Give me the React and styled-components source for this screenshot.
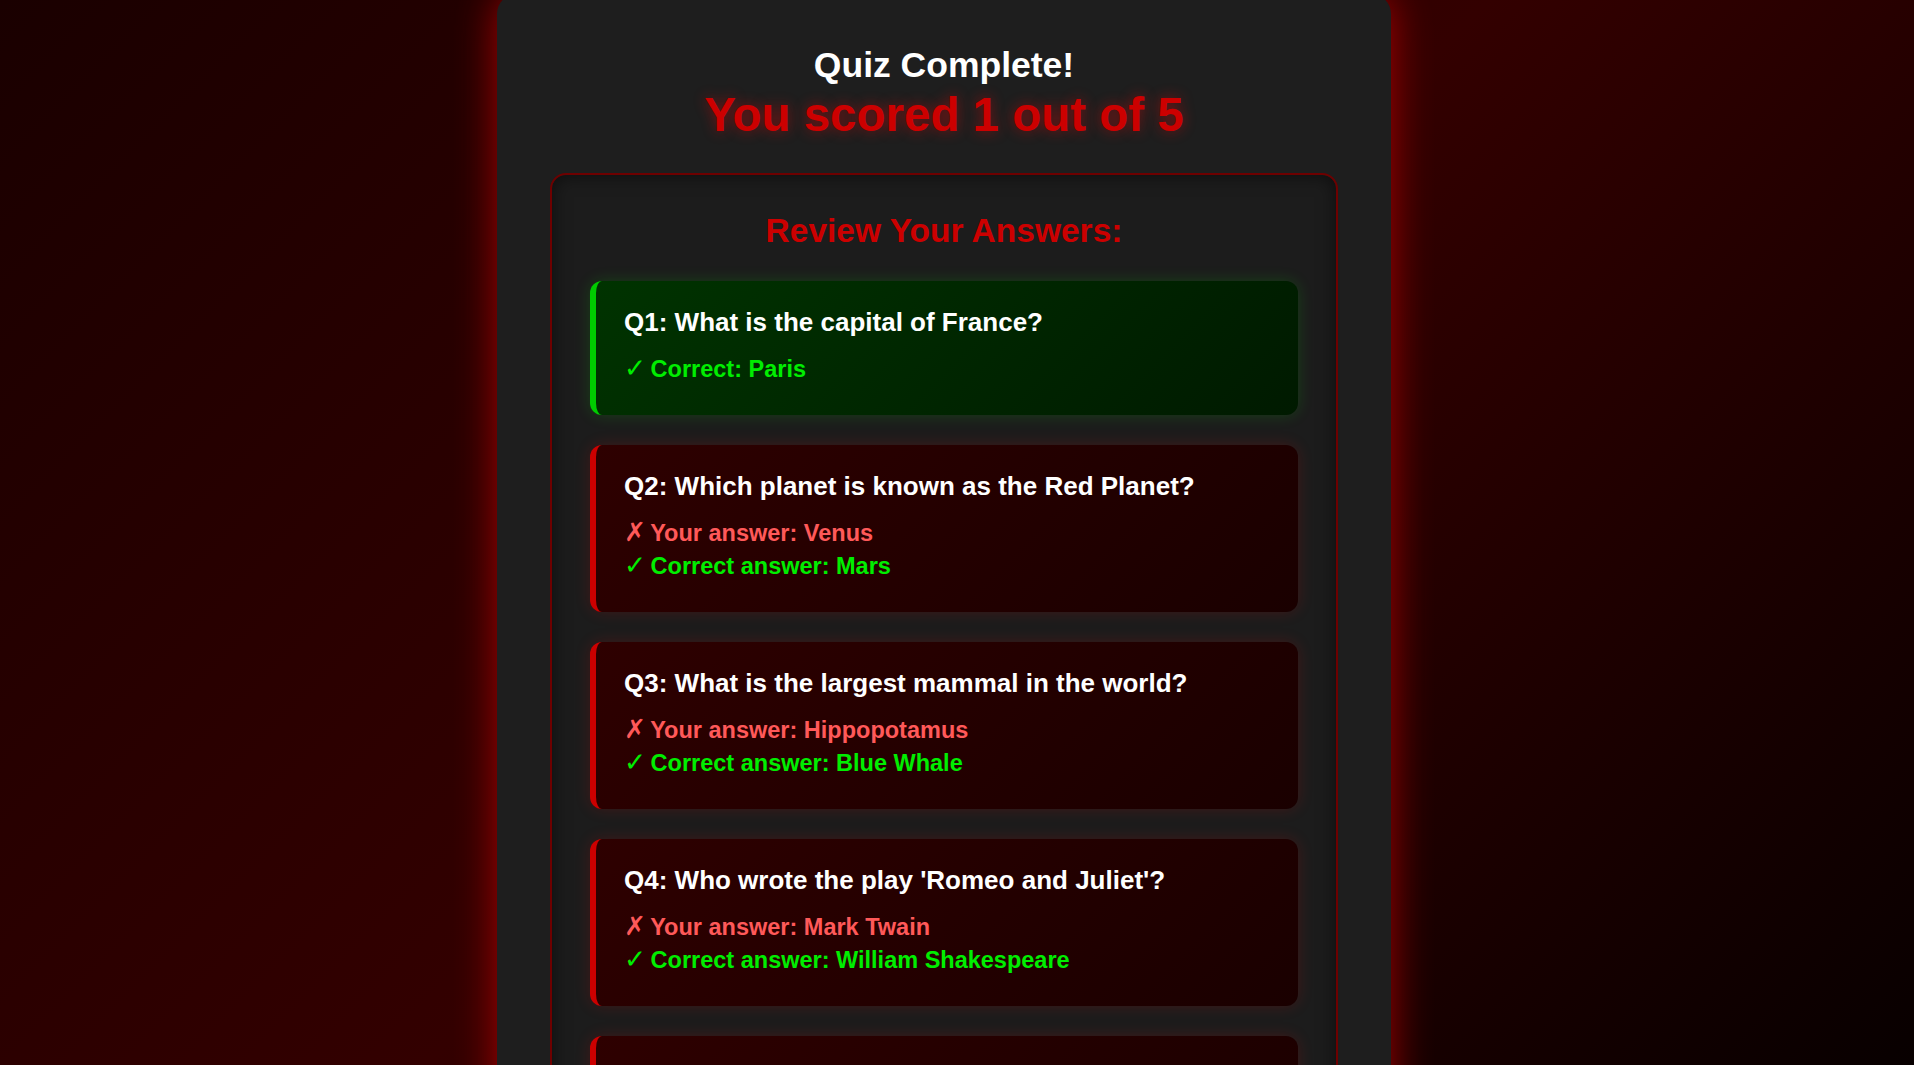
import React, {useLayoutEffect} from 'react';
import styled, {createGlobalStyle} from 'styled-components';

const questions = [
  {id: 1, text: 'What is the capital of France?', picked: 'Paris', answer: 'Paris'},
  {id: 2, text: 'Which planet is known as the Red Planet?', picked: 'Venus', answer: 'Mars'},
  {id: 3, text: 'What is the largest mammal in the world?', picked: 'Hippopotamus', answer: 'Blue Whale'},
  {id: 4, text: "Who wrote the play 'Romeo and Juliet'?", picked: 'Mark Twain', answer: 'William Shakespeare'},
  {id: 5, text: 'What is the chemical symbol for gold?', picked: 'Ag', answer: 'Au'},
];

const GlobalStyle = createGlobalStyle`
  html, body {
    margin: 0;
    padding: 0;
  }
  body {
    min-height: 100vh;
    font-family: 'Liberation Sans', Arial, sans-serif;
    background: linear-gradient(135deg, #1a0000 0%, #330000 50%, #080000 100%);
    background-attachment: fixed;
    color: #fff;
  }
`

// right padding leaves room where the browser scrollbar sat in the reference
const Page = styled.div`
  display: flex;
  justify-content: center;
  padding: 0 26px 60px 0;
`

const Container = styled.div`
  width: 894px;
  box-sizing: border-box;
  padding: 51px 53px 51px;
  background-color: #1e1e1e;
  border-radius: 20px;
  box-shadow: 0 0 40px rgba(210, 0, 0, 0.75);
  text-align: center;
`

const Title = styled.h1`
  margin: 0;
  font-size: 35.5px;
  font-weight: bold;
  color: #ffffff;
`

const Score = styled.h2`
  margin: 1px 0 0;
  font-size: 47.5px;
  font-weight: bold;
  color: #cc0000;
  text-shadow: 0 0 14px rgba(255, 0, 0, 0.45);
`

const ReviewBox = styled.div`
  margin-top: 31px;
  padding: 37px 38px;
  border: 2px solid #6e0000;
  border-radius: 16px;
  background-color: #1c1c1c;
  box-shadow: inset 0 0 18px rgba(0, 0, 0, 0.55);
  text-align: left;
`

const ReviewTitle = styled.h3`
  margin: 0 0 31px;
  font-size: 33.5px;
  font-weight: bold;
  color: #cc0000;
  text-align: center;
`

const CardList = styled.div`
  display: flex;
  flex-direction: column;
  gap: 30px;
`

const Card = styled.div`
  padding: 26px 28px 26px;
  border-left: 6px solid ${p => (p.$correct ? '#00cc00' : '#cc0000')};
  border-radius: 12px;
  background: ${p =>
    p.$correct
      ? 'linear-gradient(135deg, #003300, #001a00)'
      : 'linear-gradient(135deg, #2e0000, #1a0000)'};
  box-shadow: 0 0 16px ${p => (p.$correct ? 'rgba(0, 255, 0, 0.16)' : 'rgba(255, 0, 0, 0.16)')};
`

const Question = styled.p`
  margin: 0 0 19px;
  font-size: 26px;
  line-height: 30px;
  font-weight: bold;
  color: #ffffff;
`

const Answer = styled.p`
  margin: 0 0 6px;
  font-size: 23.5px;
  line-height: 27px;
  font-weight: bold;
  color: ${p => (p.$wrong ? '#ff5959' : '#00ee00')};
`

const Mark = styled.span`
  margin-right: -2px;
  font-family: 'DejaVu Sans', sans-serif;
  font-weight: normal;
  font-size: 1.12em;
  line-height: 0;
`

const RestartButton = styled.button`
  margin-top: 40px;
  padding: 16px 40px;
  font-family: 'Liberation Sans', Arial, sans-serif;
  font-size: 22px;
  font-weight: bold;
  color: #fff;
  background-color: #cc0000;
  border: none;
  border-radius: 10px;
  box-shadow: 0 0 15px rgba(255, 0, 0, 0.5);
  cursor: pointer;
`

const App = () => {
  // the reference was taken a few pixels down the page
  useLayoutEffect(() => {
    window.scrollTo(0, 6);
  }, []);

  const score = questions.filter(q => q.picked === q.answer).length;

  return (
    <Page>
      <GlobalStyle />
      <Container>
        <Title>Quiz Complete!</Title>
        <Score>You scored {score} out of {questions.length}</Score>
        <ReviewBox>
          <ReviewTitle>Review Your Answers:</ReviewTitle>
          <CardList>
            {questions.map(q => {
              const correct = q.picked === q.answer;
              return (
                <Card key={q.id} $correct={correct}>
                  <Question>Q{q.id}: {q.text}</Question>
                  {correct ? (
                    <Answer><Mark>✓</Mark> Correct: {q.answer}</Answer>
                  ) : (
                    <>
                      <Answer $wrong><Mark>✗</Mark> Your answer: {q.picked}</Answer>
                      <Answer><Mark>✓</Mark> Correct answer: {q.answer}</Answer>
                    </>
                  )}
                </Card>
              );
            })}
          </CardList>
        </ReviewBox>
        <RestartButton>Restart Quiz</RestartButton>
      </Container>
    </Page>
  );
};

export default App;
